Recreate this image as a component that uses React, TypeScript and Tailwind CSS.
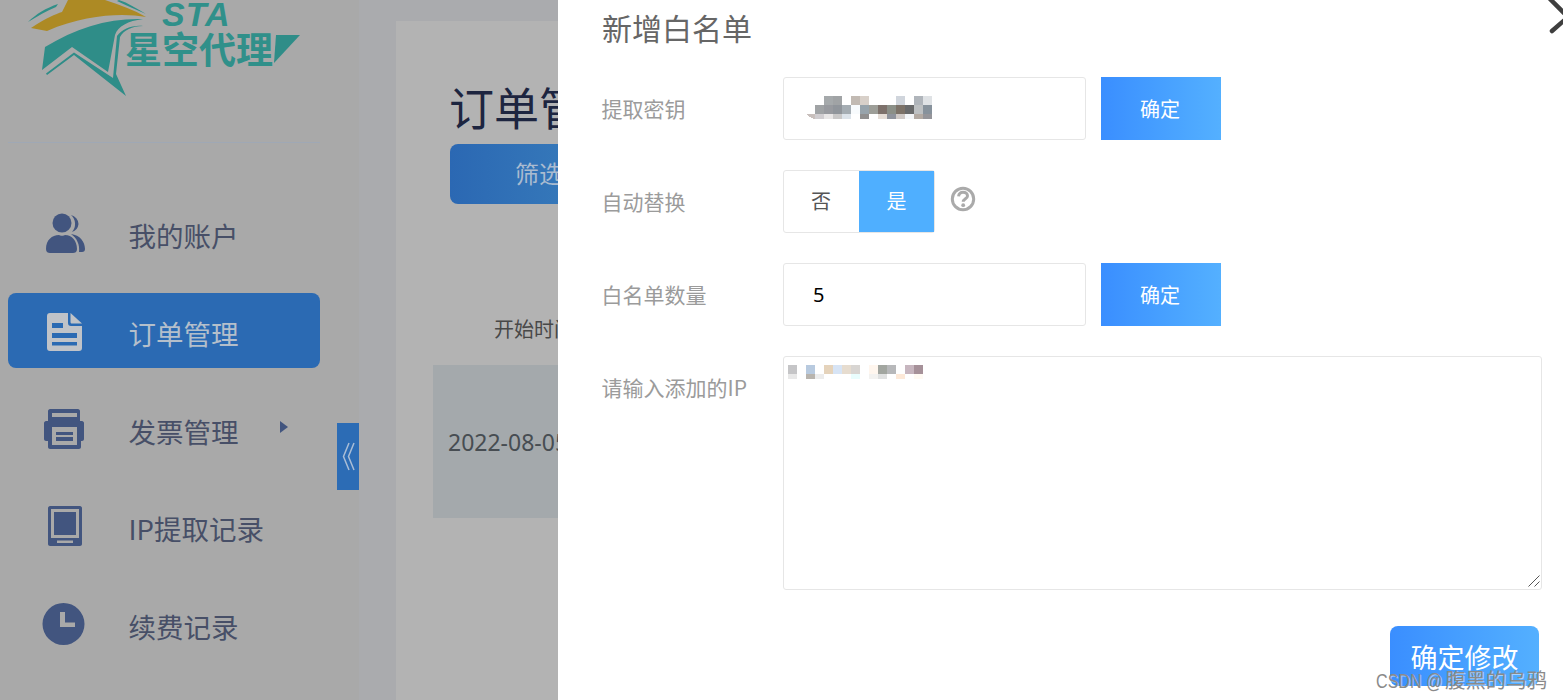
const sans = "font-['Noto_Sans_CJK_SC','Noto_Sans',sans-serif]";

type Cell = [number, string, number?];
const keyRows: { y: number; h: number; cells: Cell[] }[] = [
  { y: 0, h: 9, cells: [[18, "#a5a9ab"], [27, "#a0a3a5"], [45, "#c2bab3"], [54, "#d8d0c9"], [90, "#d0d5dc"], [108, "#b0b5bb"], [117, "#dfe2e5"]] },
  { y: 9, h: 9, cells: [[9, "#a0a3a5"], [18, "#989a9f"], [27, "#90959b"], [36, "#a5adb3"], [45, "#f8fbfd"], [54, "#97a3ab"], [63, "#9d9e98"], [72, "#7d716b"], [81, "#8b8f87"], [90, "#7c7268"], [99, "#696a6b"], [108, "#bdc0c2"], [117, "#87929c"]] },
  { y: 18, h: 5, cells: [[9, "#d0cdd0"], [18, "#e8e6e6"], [27, "#c9c8c8"], [36, "#dce3ea"], [54, "#908f8f"], [72, "#e5ddd6"], [81, "#8f939c"], [90, "#cfc9c6"], [99, "#f4f6f9"], [108, "#b3aaa3"], [117, "#95959a"]] },
];
const ipRows: { y: number; h: number; cells: Cell[] }[] = [
  { y: 0, h: 9, cells: [[0, "#c5c5c7"], [18, "#b8cadf"], [36, "#e5d3bb"], [45, "#d7e4f5"], [54, "#e6dccf"], [63, "#d8d5d2"], [81, "#fff6ee"], [90, "#a2a6a0"], [99, "#b7b8ba"], [117, "#c7b6bf"], [126, "#a69199"]] },
  { y: 9, h: 5, cells: [[0, "#e8e8e8"], [18, "#b8b4ae"], [27, "#ececec"], [63, "#e9fdfd"], [81, "#f3f2f0"], [90, "#e0e1e1"], [108, "#fde9d8"], [126, "#fffaf3"]] },
];

function Mosaic({ rows, w, h, extra }: { rows: typeof keyRows; w: number; h: number; extra?: React.ReactNode }) {
  return (
    <svg width={w} height={h} viewBox={`0 0 ${w} ${h}`} shapeRendering="crispEdges">
      {rows.map((r) => r.cells.map(([x, c]) => <rect key={`${r.y}-${x}`} x={x} y={r.y} width={9} height={r.h} fill={c} />))}
      {extra}
    </svg>
  );
}

function Logo() {
  return (
    <div className="relative h-[143px] w-[312px] overflow-hidden border-b border-[#9fa8b5]">
      <svg className="absolute left-[-8px] top-0" width="160" height="100" viewBox="0 0 160 100">
        <path d="M31 28 C46 18 56 14 62 12 L68 0 L105 0 C120 5 134 10 146 17 C124 13 86 14 47 31 Z" fill="#ad8a24" />
        <path d="M28 22 C36 14 46 8 58 4 L56 7 C46 11 38 16 28 22 Z" fill="#2f8f88" />
        <path d="M119 0 C128 3 136 8 146 14 C136 10 126 5 117 1 Z" fill="#2f8f88" />
        <path d="M45 47 C76 28 108 18 143 19 C128 21 118 26 115 35 L108 72 L72 47 L42 70 Z" fill="#2f8d88" />
        <path d="M143 26 C132 26 124 30 120 37 L116 74 L126 96 L74 55 L47 75 L46 73.5 L74 52.5 L113 78 L117 36 C122 29 132 25 143 26 Z" fill="#2f8d88" />
      </svg>
      <span className="absolute left-[154px] top-0 text-[34px] leading-[28px] tracking-[1px] font-bold italic text-[#30908a] font-['Liberation_Sans',sans-serif]">STA</span>
      <span className={`absolute left-[117px] top-[29px] text-[37px] leading-[38px] font-bold whitespace-nowrap text-[#30908a] ${sans}`}>星空代理</span>
      <svg className="absolute left-[266px] top-[35px]" width="26" height="28" viewBox="0 0 26 28"><path d="M2 0 L26 0 L0 28 Z" fill="#2f8d88" /></svg>
    </div>
  );
}

function NavIcon({ name, className }: { name: string; className: string }) {
  const c = "currentColor";
  if (name === "users")
    return (
      <svg className={className} width="44" height="42" viewBox="0 0 44 42" fill={c}>
        <circle cx="20" cy="11" r="9.5" />
        <path d="M29 3 A9.5 9.5 0 0 1 36.5 12 A9.5 9.5 0 0 1 30 20 A12 12 0 0 0 29 3 Z" />
        <path d="M4 37 C4 28 10 23 17 23 C18 24 22 24 23 23 C30 23 35 29 35 37 C35 40 33 41 31 41 L8 41 C6 41 4 40 4 37 Z" />
        <path d="M29 22 C38 23 43 30 43 37 C43 39 42 40 40 40 L37 40 C38 33 35 26 29 22 Z" />
      </svg>
    );
  if (name === "doc")
    return (
      <svg className={className} width="44" height="42" viewBox="0 0 44 42" fill={c} fillRule="evenodd">
        <path d="M8 3 C6 3 5 4 5 6 L5 38 C5 40 6 41 8 41 L37 41 C39 41 40 40 40 38 L40 16 L29 16 C27 16 26 15 26 13 L26 3 Z M10 13 L21 13 L21 18 L10 18 Z M10 23 L35 23 L35 28 L10 28 Z M10 32 L35 32 L35 35.5 L10 35.5 Z" />
        <path d="M28.5 3 L40 13.5 L30 13.5 C29 13.5 28.5 13 28.5 12 Z" />
      </svg>
    );
  if (name === "print")
    return (
      <svg className={className} width="44" height="42" viewBox="0 0 44 42" fill={c} fillRule="evenodd">
        <path d="M8 1 L36 1 C37 1 38 2 38 3 L38 13 L40 13 C41 13 42 14 42 15 L42 31 C42 32 41 33 40 33 L39 33 L39 39 C39 40 38 41 37 41 L8 41 C7 41 6 40 6 39 L6 33 L4 33 C3 33 2 32 2 31 L2 15 C2 14 3 13 4 13 L6 13 L6 3 C6 2 7 1 8 1 Z M10 5 L10 9 L35 9 L35 5 Z M10 19 L10 37 L35 37 L35 19 Z" />
        <path d="M14 24 L31 24 L31 27 L14 27 Z M14 29 L31 29 L31 33 L14 33 Z" />
      </svg>
    );
  if (name === "tablet")
    return (
      <svg className={className} width="44" height="42" viewBox="0 0 44 42" fill={c} fillRule="evenodd">
        <path d="M8 1 L38 1 C39 1 40 2 40 3 L40 39 C40 40 39 41 38 41 L8 41 C7 41 6 40 6 39 L6 3 C6 2 7 1 8 1 Z M9 4 L9 33 L37 33 L37 4 Z M15 35.5 L15 38 L31 38 L31 35.5 Z" />
        <path d="M12 7 L34 7 L34 30 L12 30 Z" />
      </svg>
    );
  return (
    <svg className={className} width="44" height="42" viewBox="0 0 44 42" fill={c} fillRule="evenodd">
      <path d="M21.5 0 A21 21 0 1 1 21.5 42 A21 21 0 1 1 21.5 0 Z M18 9 L18 24 L33 24 L33 19.5 L23 19.5 L23 9 Z" />
    </svg>
  );
}

const navItems = [
  { icon: "users", label: "我的账户" },
  { icon: "doc", label: "订单管理", active: true },
  { icon: "print", label: "发票管理", arrow: true },
  { icon: "tablet", label: "IP提取记录" },
  { icon: "clock", label: "续费记录" },
];

function Sidebar() {
  return (
    <aside className="relative h-[700px] w-[359px] shrink-0 bg-[#a9a9a9] pl-2">
      <Logo />
      <nav className="mt-[52.5px] flex w-[312px] flex-col gap-[22.75px]">
        {navItems.map((n) => (
          <div
            key={n.label}
            className={`relative flex h-[75px] shrink-0 items-center rounded-lg pl-[34px] ${n.active ? "bg-[#2b6ab3] text-[#b4bfcb]" : "text-[#474f67]"}`}
          >
            <NavIcon name={n.icon} className={`shrink-0 ${n.active ? "text-[#c0c3c8]" : "text-[#42557f]"}`} />
            <span className={`ml-[42.5px] mt-[4px] text-[27.5px] leading-[40px] whitespace-nowrap ${sans}`}>{n.label}</span>
            {n.arrow && <span className="absolute left-[272px] top-[30px] h-0 w-0 border-y-[6px] border-l-[8px] border-y-transparent border-l-[#42557f]" />}
          </div>
        ))}
      </nav>
      <div className="absolute left-[337px] top-[423px] flex h-[67px] w-[22px] items-center justify-center bg-[#2c6cb5]">
        <svg className="ml-[1px]" width="13" height="29" viewBox="0 0 13 29" fill="none" stroke="#a9bdd6" strokeWidth="1.5">
          <path d="M7 1 L1.5 14.5 L7 28 M12 1 L6.5 14.5 L12 28" />
        </svg>
      </div>
    </aside>
  );
}

function Main() {
  return (
    <main className="h-[700px] flex-1 overflow-hidden bg-[#aaabae] pl-[37px] pt-[21px]">
      <div className={`h-[679px] bg-[#b3b3b3] ${sans}`}>
        <div className="pl-[54px] pt-[60px]">
          <h1 className="-ml-[1px] h-[63px] text-[45px] leading-[52px] font-normal whitespace-nowrap text-[#1d2540]">订单管理</h1>
          <div className="flex h-[60px] w-[220px] items-center rounded-lg bg-gradient-to-r from-[#2b68b3] to-[#3f86bf] pb-[2px] pl-[65px] text-[24px] text-[#aabbd0]">筛选</div>
        </div>
        <div className="mt-[108px] pl-[98px] text-[20px] leading-[34px] whitespace-nowrap text-[#484848]">开始时间</div>
        <div className="ml-[37px] mt-[19px] flex h-[153px] items-center bg-[#a4a9ac] pl-[15px] pt-[2px] font-['Noto_Sans',sans-serif] text-[23px] whitespace-nowrap text-[#474d52]">2022-08-05 10:00:00</div>
      </div>
    </main>
  );
}

function Label({ children }: { children: React.ReactNode }) {
  return <div className="-ml-[0.5px] -mt-[2px] w-[181.5px] shrink-0 text-[21px] leading-[30px] whitespace-nowrap text-[#9b9b9b]">{children}</div>;
}

function ConfirmButton() {
  return <button className="ml-[15px] flex h-[63px] w-[120px] items-center justify-center bg-gradient-to-r from-[#3a8eff] to-[#54b0ff] pr-[2px] text-[20px] text-white">确定</button>;
}

function Modal() {
  return (
    <section className={`absolute inset-y-0 right-0 flex w-[1005px] flex-col bg-white pl-[44px] ${sans}`}>
      <svg className="absolute right-0 top-0" width="15" height="34" viewBox="0 0 15 34" fill="none" stroke="#3f3f3f" strokeWidth="4.5" strokeLinecap="round">
        <path d="M2 -1 L20 17 L4 31" />
      </svg>
      <h2 className="h-[77px] pt-[7px] text-[30px] leading-[40px] font-normal text-[#666]">新增白名单</h2>

      <div className="flex flex-col gap-[30px]">
        <div className="flex h-[63px] items-center">
          <Label>提取密钥</Label>
          <div className="flex h-[63px] w-[303px] items-start rounded-[3px] border border-[#e6e6e6] pl-[22px] pt-[18px]">
            <Mosaic rows={keyRows} w={126} h={23} extra={<path d="M0 18 H9 V23 H8 C5 22 2 20 0 18 Z" fill="#c8bfbc" />} />
          </div>
          <ConfirmButton />
        </div>

        <div className="flex h-[63px] items-center">
          <Label>自动替换</Label>
          <div className="flex h-[63px] w-[152px] rounded-[3px] border border-[#e6e6e6] text-[20px]">
            <div className="flex w-[75px] items-center justify-center pb-[2px] pr-[1px] text-[#555]">否</div>
            <div className="flex flex-1 items-center justify-center bg-[#4fafff] pb-[2px] text-white">是</div>
          </div>
          <svg className="-mt-[6px] ml-[15px]" width="26" height="26" viewBox="0 0 26 26" fill="none" stroke="#aaaaaa">
            <circle cx="13" cy="13" r="10.7" strokeWidth="3" />
            <path d="M8.6 10.4 C8.8 7.5 11 6.2 13 6.2 C15.6 6.2 17.5 7.8 17.5 9.9 C17.5 12.6 13.2 12.8 13.2 15.8" strokeWidth="3" />
            <circle cx="13.2" cy="19.2" r="1.9" fill="#aaaaaa" stroke="none" />
          </svg>
        </div>

        <div className="flex h-[63px] items-center">
          <Label>白名单数量</Label>
          <input readOnly value="5" className="h-[63px] w-[303px] rounded-[3px] border border-[#e6e6e6] pl-[29px] font-['Noto_Sans',sans-serif] text-[20px] text-black outline-none" />
          <ConfirmButton />
        </div>

        <div className="flex h-[234px] items-start">
          <div className="pt-[18px]"><Label>请输入添加的IP</Label></div>
          <div className="relative h-[234px] w-[759px]">
            <textarea readOnly className="block h-[234px] w-[759px] resize-none rounded-[3px] border border-[#e6e6e6] outline-none" />
            <div className="absolute left-[5px] top-[9px] leading-[0]"><Mosaic rows={ipRows} w={135} h={14} /></div>
            <svg className="absolute bottom-[3px] right-[2px]" width="12" height="12" viewBox="0 0 12 12" fill="none" stroke="#555" strokeWidth="1">
              <path d="M0.5 11.5 L11.5 0.5 M6.5 11.5 L11.5 6.5" />
            </svg>
          </div>
        </div>
      </div>

      <button className="absolute left-[832px] top-[626px] h-[60px] w-[149px] rounded-lg bg-gradient-to-r from-[#3a8eff] to-[#54b0ff] pt-[2px] text-[27px] text-white">确定修改</button>
    </section>
  );
}

export default function App() {
  return (
    <div className="relative flex h-[700px] w-[1563px] overflow-hidden">
      <Sidebar />
      <Main />
      <Modal />
      <div className="absolute left-[1376px] top-[665px] flex items-baseline font-['Liberation_Sans','Noto_Sans_CJK_SC',sans-serif] text-[20px] leading-[28px] whitespace-nowrap text-[#8a8a8a] [text-shadow:1px_1px_0_rgba(255,255,255,0.5)]">
        <span className="inline-block w-[69px] origin-left scale-x-[0.805]">CSDN @</span>
        <span className={`text-[20.4px] ${sans}`}>腹黑的乌鸦</span>
      </div>
    </div>
  );
}
